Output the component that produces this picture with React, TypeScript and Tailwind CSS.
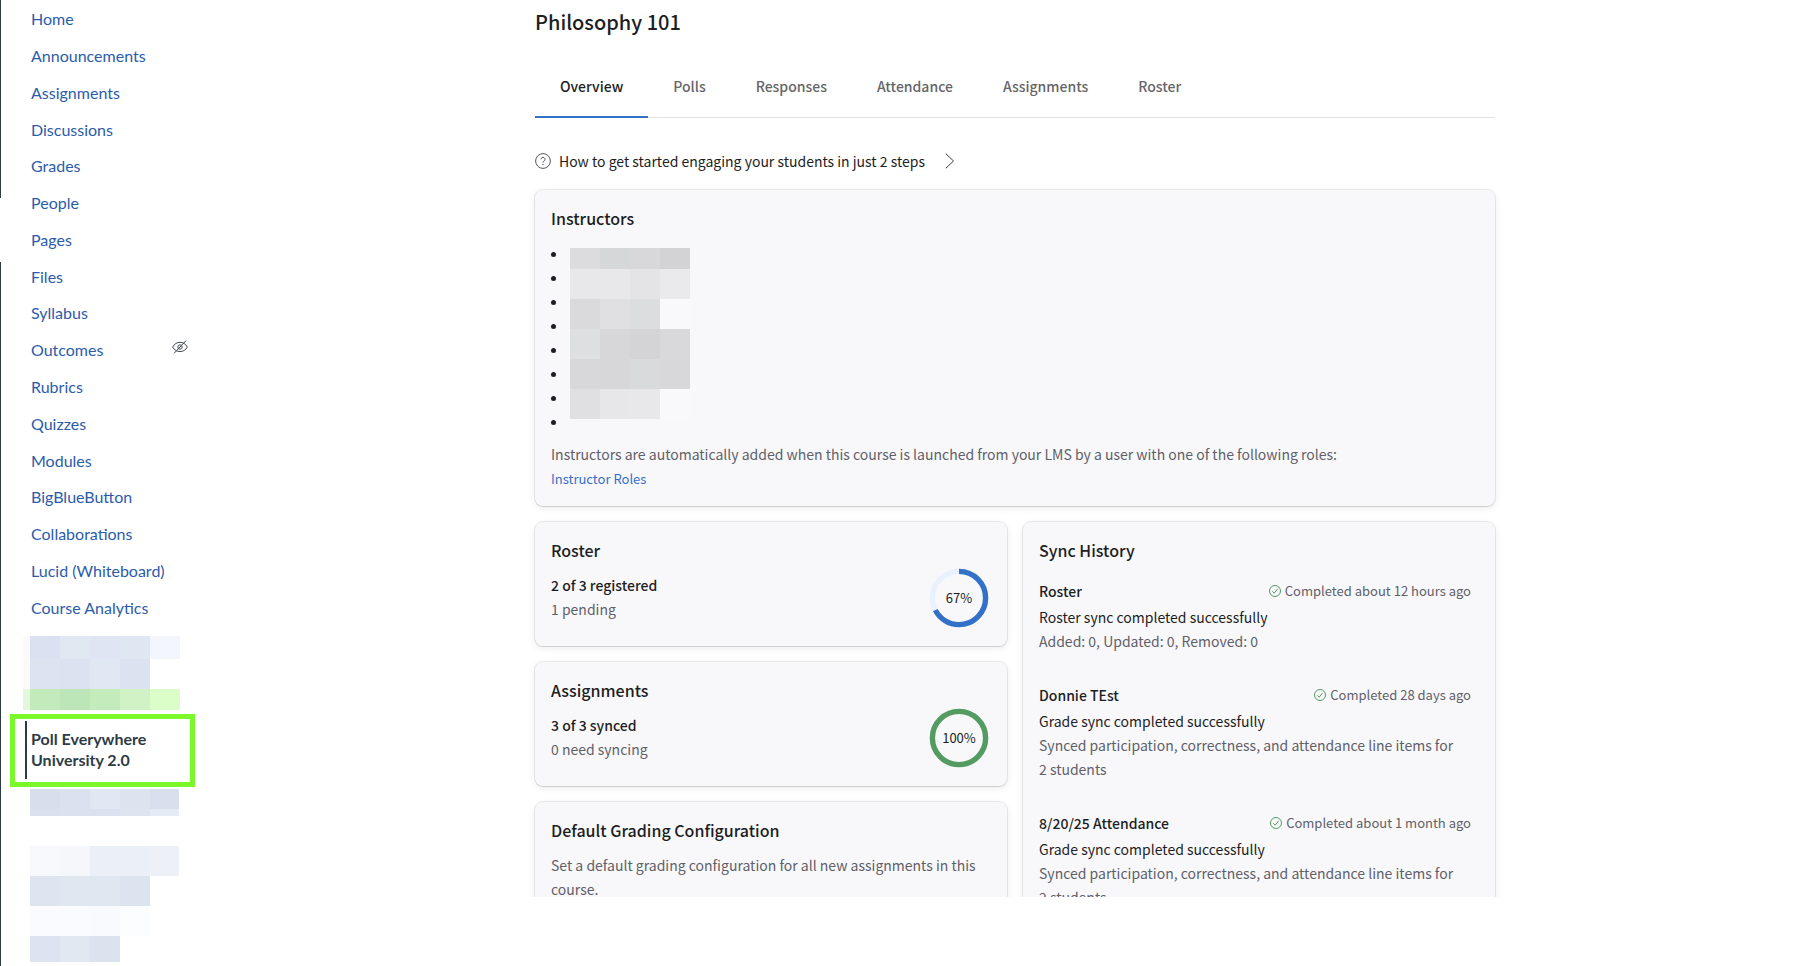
import type { ReactNode } from 'react';

const navLinks = [
  'Home',
  'Announcements',
  'Assignments',
  'Discussions',
  'Grades',
  'People',
  'Pages',
  'Files',
  'Syllabus',
  'Outcomes',
  'Rubrics',
  'Quizzes',
  'Modules',
  'BigBlueButton',
  'Collaborations',
  'Lucid (Whiteboard)',
  'Course Analytics',
];

const tabs = ['Overview', 'Polls', 'Responses', 'Attendance', 'Assignments', 'Roster'];

const syncs = [
  {
    name: 'Roster',
    when: 'Completed about 12 hours ago',
    status: 'Roster sync completed successfully',
    detail: 'Added: 0, Updated: 0, Removed: 0',
  },
  {
    name: 'Donnie TEst',
    when: 'Completed 28 days ago',
    status: 'Grade sync completed successfully',
    detail: 'Synced participation, correctness, and attendance line items for 2\u00a0students',
  },
  {
    name: '8/20/25 Attendance',
    when: 'Completed about 1 month ago',
    status: 'Grade sync completed successfully',
    detail: 'Synced participation, correctness, and attendance line items for 2\u00a0students',
  },
];

type MosaicRow = { height: string; cells: string[] };

const mosaicUpper: MosaicRow[] = [
  { height: 'h-[23px]', cells: ['bg-[#fafafa]', 'bg-[#dae1f0]', 'bg-[#e0e8f2]', 'bg-[#dfe5f2]', 'bg-[#dfe7f2]', 'bg-[#f3f7fd]'] },
  { height: 'h-[30px]', cells: ['bg-[#fafafa]', 'bg-[#dde4f1]', 'bg-[#dce3f0]', 'bg-[#e0e8f3]', 'bg-[#dce3f0]', 'bg-white'] },
  { height: 'h-[21px]', cells: ['bg-[#e3f8da]', 'bg-[#c3eaba]', 'bg-[#bde6b8]', 'bg-[#c4ebbc]', 'bg-[#d0f2c4]', 'bg-[#dbfdc8]'] },
];

const mosaicMiddle: MosaicRow[] = [
  { height: 'h-[20px]', cells: ['bg-white', 'bg-[#d7dfed]', 'bg-[#dae1ef]', 'bg-[#e0e8f3]', 'bg-[#dce4f0]', 'bg-[#d8e0ed]'] },
  { height: 'h-[7px]', cells: ['bg-white', 'bg-[#d9e1ee]', 'bg-[#dae1ef]', 'bg-[#dae2ef]', 'bg-[#dde5f1]', 'bg-[#e5ebf5]'] },
];

const mosaicLower: MosaicRow[] = [
  { height: 'h-[30px]', cells: ['bg-white', 'bg-[#f7f9fd]', 'bg-[#f5f7fb]', 'bg-[#eaeff8]', 'bg-[#eaeff8]', 'bg-[#edf1f7]'] },
  { height: 'h-[30px]', cells: ['bg-white', 'bg-[#dee5f1]', 'bg-[#dfe7f1]', 'bg-[#dfe8f1]', 'bg-[#dce4f0]', 'bg-white'] },
  { height: 'h-[30px]', cells: ['bg-white', 'bg-[#fafbfe]', 'bg-[#fafbfe]', 'bg-[#f8fafe]', 'bg-[#fcfdfe]', 'bg-white'] },
  { height: 'h-[26px]', cells: ['bg-white', 'bg-[#dce4f1]', 'bg-[#e0e8f2]', 'bg-[#dbe3ee]', 'bg-white', 'bg-white'] },
];

const mosaicNames: MosaicRow[] = [
  { height: 'h-[21px]', cells: ['bg-[#dcdcde]', 'bg-[#d5d7d9]', 'bg-[#d8d8da]', 'bg-[#d3d3d5]'] },
  { height: 'h-[30px]', cells: ['bg-[#e8e8ea]', 'bg-[#e8e8ea]', 'bg-[#e4e4e6]', 'bg-[#eaeaec]'] },
  { height: 'h-[30px]', cells: ['bg-[#dadadc]', 'bg-[#e0e0e2]', 'bg-[#dbddde]', 'bg-[#f9f9fb]'] },
  { height: 'h-[30px]', cells: ['bg-[#dddfe1]', 'bg-[#d7d7d9]', 'bg-[#d4d4d6]', 'bg-[#d9d9db]'] },
  { height: 'h-[30px]', cells: ['bg-[#d8d8da]', 'bg-[#d7d7d9]', 'bg-[#d8dadb]', 'bg-[#d8d8da]'] },
  { height: 'h-[30px]', cells: ['bg-[#e0e0e2]', 'bg-[#e7e7e9]', 'bg-[#e8e8ea]', 'bg-[#f9f9fb]'] },
];

function Mosaic({ rows, columns }: { rows: MosaicRow[]; columns: string }) {
  return (
    <div aria-hidden="true">
      {rows.map((row, r) => (
        <div key={r} className={`grid ${columns} ${row.height}`}>
          {row.cells.map((cell, c) => (
            <span key={c} className={cell} />
          ))}
        </div>
      ))}
    </div>
  );
}

function HiddenIcon() {
  return (
    <svg
      width="16"
      height="14"
      viewBox="0 0 16 14"
      fill="none"
      stroke="#414b53"
      className="self-start"
      role="img"
      aria-label="Hidden from students"
    >
      <path d="M.6 7C2.300 4 5 2.300 8 2.300s5.700 1.700 7.400 4.700c-1.700 3-4.400 4.600-7.400 4.600S2.300 10 .6 7Z" />
      <circle cx="8" cy="7" r="2.200" />
      <path d="M14 .6 2 13.400" />
    </svg>
  );
}

function Card({ title, children }: { title: string; children: ReactNode }) {
  return (
    <section className="rounded-lg bg-[#f8f8fb] p-4 shadow-[0_0_0_1px_rgba(0,0,0,0.07),0_1px_1px_rgba(0,0,0,0.08),0_2px_8px_rgba(0,0,0,0.08)]">
      <h2 className="text-base leading-6 font-medium">{title}</h2>
      {children}
    </section>
  );
}

function Ring({ value, color, track }: { value: number; color: string; track: string }) {
  const length = 2 * Math.PI * 26.6;
  return (
    <div className="grid size-16 place-items-center">
      <svg viewBox="0 0 64 64" className="col-start-1 row-start-1 size-16 -rotate-90" fill="none" strokeWidth="5.4">
        <circle cx="32" cy="32" r="26.6" className={track} />
        <circle cx="32" cy="32" r="26.6" className={color} strokeDasharray={`${(length * value) / 100} ${length}`} />
      </svg>
      <span className="col-start-1 row-start-1 text-[13px] leading-5">{value}%</span>
    </div>
  );
}

function Stat({ title, main, sub, children }: { title: string; main: string; sub: string; children: ReactNode }) {
  return (
    <Card title={title}>
      <div className="mt-1 flex items-start justify-between">
        <div className="pt-[7px] text-sm leading-6">
          <p className="font-medium">{main}</p>
          <p className="text-[#5f6068]">{sub}</p>
        </div>
        {children}
      </div>
    </Card>
  );
}

export default function App() {
  return (
    <div className="flex bg-white">
      <div className="flex w-px flex-col self-stretch" aria-hidden="true">
        <div className="h-[198px] bg-[#2d3b45]" />
        <div className="h-16" />
        <div className="flex-1 bg-[#2d3b45]" />
      </div>

      <nav className="w-[217px] shrink-0 pb-1 font-['Lato',sans-serif] text-base" aria-label="Course">
        <ul className="mt-px grid min-h-[625px] auto-rows-fr items-center pl-[30px] text-[#2b5cab]">
          {navLinks.map((label) => (
            <li key={label} className="flex w-[157px] items-center justify-between leading-5">
              <a href="#">{label}</a>
              {label === 'Outcomes' && <HiddenIcon />}
            </li>
          ))}
        </ul>

        <div className="mt-2.5 ml-[22px]">
          <Mosaic rows={mosaicUpper} columns="grid-cols-[7px_repeat(5,30px)]" />
        </div>
        <div className="mt-1 ml-[9px] w-[185px] border-[5px] border-[#7af82a] pt-0.5 pb-[3px] pl-2.5">
          <a
            href="#"
            aria-current="page"
            className="block border-l-2 border-[#2d3b45] pt-[7px] pb-[9px] pl-1 leading-[21px] font-bold text-[#2d3b45]"
          >
            Poll Everywhere
            <br />
            University 2.0
          </a>
        </div>
        <div className="mt-0.5 ml-[22px]">
          <Mosaic rows={mosaicMiddle} columns="grid-cols-[7px_repeat(4,30px)_29px]" />
        </div>
        <div className="mt-[30px] ml-[22px]">
          <Mosaic rows={mosaicLower} columns="grid-cols-[7px_repeat(4,30px)_29px]" />
        </div>
      </nav>

      <div className="min-w-0 flex-1">
        <main className="h-[897px] overflow-hidden font-['Noto_Sans_CJK_SC',sans-serif] text-[#1d1e22]">
          <div className="mx-auto max-w-[960px]">
            <h1 className="pt-2 text-xl leading-7 font-medium">Philosophy 101</h1>

            <div role="tablist" className="mt-6 flex border-b border-[#e3e3e5] text-sm leading-6">
              {tabs.map((tab, i) => (
                <button
                  key={tab}
                  type="button"
                  role="tab"
                  aria-selected={i === 0}
                  className={
                    i === 0
                      ? '-mb-px border-b-2 border-[#3370c8] px-[25px] pt-3.5 pb-[18px] font-medium'
                      : '-mb-px border-b-2 border-transparent px-[25px] pt-3.5 pb-[18px] font-medium text-[#666669]'
                  }
                >
                  {tab}
                </button>
              ))}
            </div>

            <a href="#" className="mt-[31px] flex w-fit items-center text-sm leading-6">
              <svg width="16" height="16" viewBox="0 0 16 16" fill="none" stroke="#55565b" aria-hidden="true">
                <circle cx="8" cy="8" r="7.400" />
                <path d="M6 6.300a2 2 0 1 1 3 1.800c-.7.4-1 .8-1 1.500" />
                <circle cx="8" cy="11.600" r=".3" />
              </svg>
              <span className="ml-2">How to get started engaging your students in just 2 steps</span>
              <svg width="10" height="16" viewBox="0 0 10 16" fill="none" stroke="#3a3b40" className="ml-5" aria-hidden="true">
                <path d="m.8.700 7.700 7.300-7.700 7.300" />
              </svg>
            </a>

            <div className="mt-[17px] grid gap-4">
              <Card title="Instructors">
                <div className="mt-3 flex gap-3.5">
                  <ul className="list-none" aria-label="Instructor names">
                    {Array.from({ length: 8 }, (_, i) => (
                      <li key={i} className="flex h-6 items-center">
                        <span className="size-[5px] rounded-full bg-[#1d1e22]" />
                      </li>
                    ))}
                  </ul>
                  <div className="pt-1.5">
                    <Mosaic rows={mosaicNames} columns="grid-cols-[repeat(4,30px)]" />
                  </div>
                </div>
                <p className="mt-2 text-sm leading-6 text-[#5f6068]">
                  Instructors are automatically added when this course is launched from your LMS by a user with one of the
                  following roles:
                </p>
                <a href="#" className="block w-fit pt-0.5 text-[13px] leading-[22px] text-[#3370c8]">
                  Instructor Roles
                </a>
              </Card>

              <div className="grid grid-cols-2 gap-4">
                <div className="flex flex-col gap-4">
                  <Stat title="Roster" main="2 of 3 registered" sub="1 pending">
                    <Ring value={67} color="stroke-[#3370c8]" track="stroke-[#e8f1fd]" />
                  </Stat>
                  <Stat title="Assignments" main="3 of 3 synced" sub="0 need syncing">
                    <Ring value={100} color="stroke-[#549b62]" track="stroke-[#e8f5ea]" />
                  </Stat>
                  <Card title="Default Grading Configuration">
                    <p className="mt-[11px] text-sm leading-6 text-[#5f6068]">
                      Set a default grading configuration for all new assignments in this course.
                    </p>
                  </Card>
                </div>

                <Card title="Sync History">
                  <ul className="mt-[17px] flex flex-col gap-[30px] pr-2 text-sm leading-6">
                    {syncs.map((sync) => (
                      <li key={sync.name}>
                        <div className="mb-0.5 flex items-center justify-between">
                          <h3 className="font-medium">{sync.name}</h3>
                          <span className="flex items-center gap-1 text-[13px] text-[#5f6068]">
                            <svg width="12" height="12" viewBox="0 0 12 12" fill="none" stroke="#549b62" aria-hidden="true">
                              <circle cx="6" cy="6" r="5.500" />
                              <path d="m3.300 6.300 1.900 1.900 3.500-4.400" />
                            </svg>
                            {sync.when}
                          </span>
                        </div>
                        <p>{sync.status}</p>
                        <p className="text-[#5f6068]">{sync.detail}</p>
                      </li>
                    ))}
                  </ul>
                </Card>
              </div>
            </div>
          </div>
        </main>
      </div>
    </div>
  );
}
